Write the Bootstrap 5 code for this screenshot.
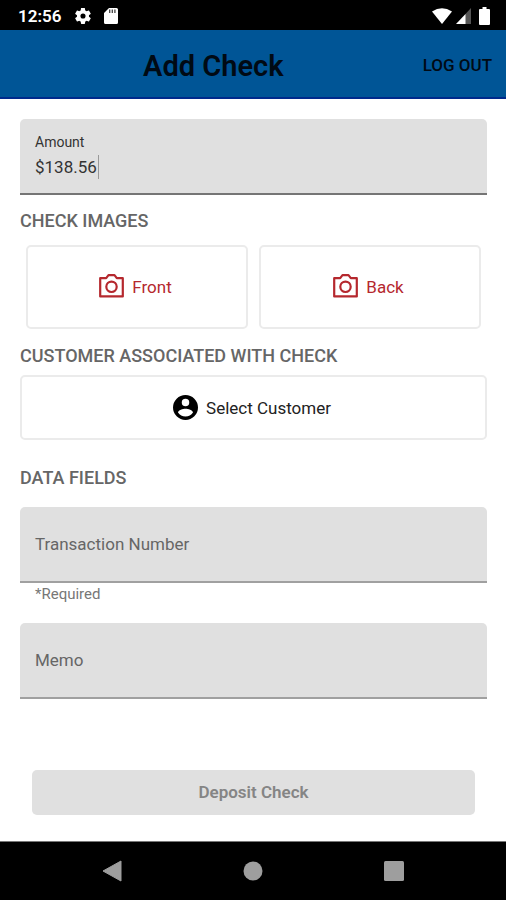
<!DOCTYPE html>
<html lang="en">
<head>
<meta charset="utf-8">
<meta name="viewport" content="width=device-width, initial-scale=1">
<title>Add Check</title>
<link href="https://cdn.jsdelivr.net/npm/bootstrap@5.3.0/dist/css/bootstrap.min.css" rel="stylesheet">
<style>
  body { font-family: Roboto, "Liberation Sans", sans-serif; font-size: 17px; line-height: 24px; color: #222; }
  svg { display: block; flex: none; }
  .status-bar { min-height: 30px; padding: 1px 16px 0 18px; font-weight: 600; }
  .status-gear { margin: 0 13px 0 14px; }
  .app-header { background: #005596; border-bottom: 2px solid #002a8c; min-height: 69px; padding: 4px 14px 0 4px; color: #000a14; }
  .app-title { font-size: 29px; line-height: 36px; font-weight: 600; }
  .log-out { font-size: 17px; font-weight: 500; color: #000a14; }
  .page-body { padding: 20px 19px 0 20px; }
  .section-title { font-size: 18px; line-height: 26px; font-weight: 500; color: #666; margin: 0; }
  .filled-field { background: #e0e0e0; border-radius: 5px 5px 0 0; border-bottom: 2px solid #a0a0a0; min-height: 76px; }
  .filled-field input, .filled-field input:focus { background: transparent; border: 0; box-shadow: none; font-size: 17px; color: #333; }
  .amount-field { border-bottom-color: #757575; padding: 12px 15px; }
  .amount-field label { font-size: 14px; line-height: 22px; display: block; color: #333; }
  .amount-field input { line-height: 28px; }
  .caret { left: 78px; top: 36px; width: 1px; height: 24px; background: #999; }
  .form-floating > .form-control { height: 74px; padding: 26px 14px 0; }
  .form-floating > label { padding: 24px 14px; color: #666; font-size: 17px; }
  .helper { font-size: 15px; line-height: 22px; padding-left: 15px; color: #777; margin-bottom: 18px; }
  .outline-btn, .outline-btn:hover { background: #fff; border: 2px solid #ebebeb; border-radius: 5px; font-size: 17px; line-height: 24px; }
  .images-title { padding-top: 13px; }
  .image-row { display: grid; grid-template-columns: 1fr 1fr; gap: 11px; padding: 11px 6px 14px; }
  .image-btn, .image-btn:hover { color: #b5282e; min-height: 84px; padding-right: 15px; }
  .image-btn svg { margin-bottom: 2px; }
  .customer-title { margin-bottom: 6px; }
  .customer-btn, .customer-btn:hover { color: #222; min-height: 65px; padding-right: 15px; }
  .customer-btn svg { margin-bottom: 1px; }
  .fields-title { padding-top: 1px; }
  .deposit-area { padding: 71px 12px 0; }
  .deposit-btn, .deposit-btn:disabled { background: #e0e0e0; color: #858585; border: 0; border-radius: 5px; min-height: 45px; font-size: 17px; font-weight: 600; opacity: 1; }
  .nav-keys { border-top: 1px solid #777; min-height: 59px; padding: 0 42px; }
  .nav-keys button { line-height: 0; }
</style>
<script src="https://cdn.jsdelivr.net/npm/bootstrap@5.3.0/dist/js/bootstrap.bundle.min.js"></script>
</head>
<body class="d-flex flex-column min-vh-100 bg-white">
  <div class="status-bar bg-black text-white d-flex align-items-center">
    <span>12:56</span>
    <svg class="status-gear" width="16" height="16" viewBox="2 2 20 20" fill="#fff"><path d="M19.4 13c0-.3.1-.6.1-1s0-.7-.1-1l2.100-1.600c.2-.1.2-.4.100-.6l-2-3.500c-.1-.2-.4-.3-.6-.2l-2.500 1c-.5-.4-1.100-.7-1.700-1l-.4-2.600c0-.3-.2-.5-.4-.5h-4c-.2 0-.4.200-.5.400l-.4 2.700c-.6.200-1.200.600-1.700 1l-2.500-1c-.2-.1-.5 0-.6.2l-2 3.500c-.1.200-.1.500.1.600L4.500 11c0 .3-.1.700-.1 1s0 .7.1 1l-2.100 1.600c-.2.200-.2.400-.1.600l2 3.500c.1.200.4.300.6.200l2.500-1c.5.400 1.100.7 1.700 1l.4 2.600c0 .3.200.5.500.5h4c.2 0 .4-.2.400-.5l.4-2.600c.6-.3 1.200-.6 1.700-1l2.500 1c.2.100.5 0 .6-.2l2-3.500c.1-.2.1-.5-.1-.6zM12 15.200a3.200 3.200 0 1 1 0-6.400 3.200 3.200 0 0 1 0 6.400z"/></svg>
    <svg width="14" height="16" viewBox="0 0 14 16"><path fill="#fff" d="M5 0h7.500A1.500 1.500 0 0 1 14 1.500v13a1.500 1.500 0 0 1-1.500 1.500h-11A1.500 1.500 0 0 1 0 14.500V5z"/><path stroke="#444" stroke-width="1.300" d="M5.700 1.500v3.500M8.300 1.500v3.500M10.900 1.500v3.500"/></svg>
    <svg class="ms-auto" width="20" height="16" viewBox="0 0 20 16"><path fill="#fff" d="M0 3.500Q10-3 20 3.500L10 16z"/></svg>
    <svg class="ms-1 me-2" width="15" height="16" viewBox="0 0 15 16"><path fill="#555" d="M9 6.500 15 0v16H9z"/><path fill="#fff" d="M0 16 9.500 6v10z"/></svg>
    <svg width="11" height="18" viewBox="0 0 11 18"><path fill="#fff" d="M3.500 0h4v2H10a1 1 0 0 1 1 1v14a1 1 0 0 1-1 1H1a1 1 0 0 1-1-1V3a1 1 0 0 1 1-1h2.500z"/></svg>
  </div>

  <header class="app-header d-flex align-items-center">
    <h1 class="app-title flex-fill text-center m-0">Add Check</h1>
    <button type="button" class="log-out btn border-0 p-0">LOG OUT</button>
  </header>

  <main class="page-body flex-grow-1">
    <form>
      <div class="filled-field amount-field position-relative">
        <label for="amount">Amount</label>
        <input id="amount" class="w-100 p-0" type="text" inputmode="decimal" value="$138.56">
        <span class="caret position-absolute"></span>
      </div>

      <h2 class="section-title images-title">CHECK IMAGES</h2>
      <div class="image-row">
        <button type="button" class="btn outline-btn image-btn d-flex align-items-center justify-content-center gap-2">
          <svg width="25" height="24" viewBox="0 0 25 24" fill="none" stroke="#b5282e" stroke-width="2.200"><path stroke-linejoin="round" d="M1.200 4.200h6l2.300-3h6l2.300 3h6v18.200H1.200z"/><circle cx="12.500" cy="12.800" r="5.200"/></svg>
          <span>Front</span>
        </button>
        <button type="button" class="btn outline-btn image-btn d-flex align-items-center justify-content-center gap-2">
          <svg width="25" height="24" viewBox="0 0 25 24" fill="none" stroke="#b5282e" stroke-width="2.200"><path stroke-linejoin="round" d="M1.200 4.200h6l2.300-3h6l2.300 3h6v18.200H1.200z"/><circle cx="12.500" cy="12.800" r="5.200"/></svg>
          <span>Back</span>
        </button>
      </div>

      <h2 class="section-title customer-title">CUSTOMER ASSOCIATED WITH CHECK</h2>
      <button type="button" class="btn outline-btn customer-btn w-100 d-flex align-items-center justify-content-center gap-2 mb-4">
        <svg width="25" height="25" viewBox="2 2 20 20"><path d="M12 2a10 10 0 1 0 0 20 10 10 0 0 0 0-20zm0 3a3 3 0 1 1 0 6 3 3 0 0 1 0-6zm0 14.200a7.200 7.200 0 0 1-6-3.220c.030-1.990 4-3.080 6-3.080s5.970 1.090 6 3.080a7.200 7.200 0 0 1-6 3.220z"/></svg>
        <span>Select Customer</span>
      </button>

      <h2 class="section-title fields-title mb-3">DATA FIELDS</h2>
      <div class="filled-field form-floating">
        <input id="transaction" class="form-control" type="text" placeholder="Transaction Number" aria-describedby="transaction-help" required>
        <label for="transaction">Transaction Number</label>
      </div>
      <div id="transaction-help" class="helper">*Required</div>
      <div class="filled-field form-floating">
        <input id="memo" class="form-control" type="text" placeholder="Memo">
        <label for="memo">Memo</label>
      </div>

      <div class="deposit-area">
        <button type="submit" class="btn deposit-btn w-100" disabled>Deposit Check</button>
      </div>
    </form>
  </main>

  <nav class="nav-keys bg-black d-flex align-items-center" aria-label="System">
    <button type="button" class="btn border-0 p-0 flex-fill d-flex justify-content-center" aria-label="Back"><svg width="20" height="22" viewBox="0 0 20 22"><path fill="#9e9e9e" d="M19 1v20L1 11z" stroke="#9e9e9e" stroke-linejoin="round"/></svg></button>
    <button type="button" class="btn border-0 p-0 flex-fill d-flex justify-content-center" aria-label="Home"><svg width="20" height="20" viewBox="0 0 20 20"><circle cx="10" cy="10" r="9.500" fill="#9e9e9e"/></svg></button>
    <button type="button" class="btn border-0 p-0 flex-fill d-flex justify-content-center" aria-label="Overview"><svg width="20" height="20" viewBox="0 0 20 20"><rect width="20" height="20" rx="1.500" fill="#9e9e9e"/></svg></button>
  </nav>
</body>
</html>
